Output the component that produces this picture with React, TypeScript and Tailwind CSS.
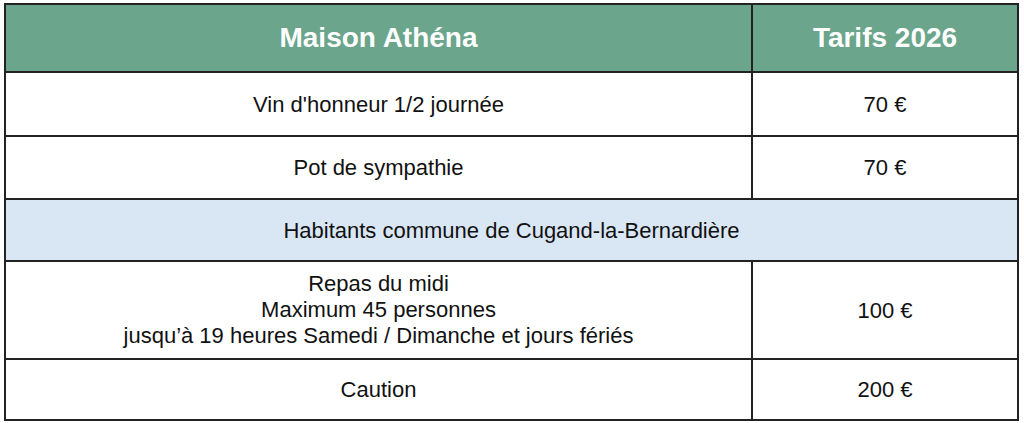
import React from "react";

const rows = [
  { label: "Vin d'honneur 1/2 journée", price: "70 €", h: "h-[64px]" },
  { label: "Pot de sympathie", price: "70 €", h: "h-[63px]" },
];

const App = () => {
  return (
    <div className="w-[1024px] h-[423px] bg-white pt-[3px] pl-[4px] font-['Liberation_Sans',Arial,sans-serif] text-[#111]">
      <table className="w-[1015px] border-collapse border-2 border-[#222]">
        <thead>
          <tr className="h-[68px] bg-[#6aa58c] text-white">
            <th className="border-2 border-[#222] text-[28px] font-bold">Maison Athéna</th>
            <th className="w-[266px] border-2 border-[#222] text-[28px] font-bold">Tarifs 2026</th>
          </tr>
        </thead>
        <tbody className="text-[22px]">
          {rows.map((r) => (
            <tr key={r.label} className={r.h}>
              <td className="border-2 border-[#222] text-center">{r.label}</td>
              <td className="border-2 border-[#222] text-center">{r.price}</td>
            </tr>
          ))}
          {/* bandeau habitants */}
          <tr className="h-[62px] bg-[#d9e7f5]">
            <td colSpan={2} className="border-2 border-[#222] text-center">
              Habitants commune de Cugand-la-Bernardière
            </td>
          </tr>
          <tr className="h-[98px]">
            <td className="border-2 border-[#222] text-center leading-[26px]">
              Repas du midi
              <br />
              Maximum 45 personnes
              <br />
              jusqu’à 19 heures Samedi / Dimanche et jours fériés
            </td>
            <td className="border-2 border-[#222] text-center">100 €</td>
          </tr>
          <tr className="h-[61px]">
            <td className="border-2 border-[#222] text-center">Caution</td>
            <td className="border-2 border-[#222] text-center">200 €</td>
          </tr>
        </tbody>
      </table>
    </div>
  );
};

export default App;
